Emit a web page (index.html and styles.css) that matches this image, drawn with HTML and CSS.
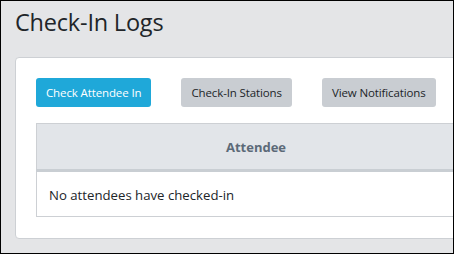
FILE: index.html
```html
<!DOCTYPE html>
<html lang="en">

<head>
    <meta charset="UTF-8">
    <meta name="viewport" content="width=device-width, initial-scale=1.0">
    <title>Check-In Logs</title>
    <link rel="stylesheet" href="styles.css">
</head>

<body>
    <div class="page">
        <h1>Check-In Logs</h1>

        <div class="card">
            <div class="actions">
                <button class="btn btn-primary">Check Attendee In</button>
                <button class="btn btn-secondary">Check-In Stations</button>
                <button class="btn btn-secondary">View Notifications</button>
            </div>

            <table class="logs">
                <thead>
                    <tr>
                        <th>Attendee</th>
                    </tr>
                </thead>
                <tbody>
                    <tr>
                        <td>No attendees have checked-in</td>
                    </tr>
                </tbody>
            </table>
        </div>
    </div>
</body>

</html>
```

FILE: styles.css
```css
html {
    background-color: #e4e5e7;
    font-family: "Open Sans", Arial, Helvetica, sans-serif;
}

body {
    margin: 0;
    overflow: hidden;
}

.page {
    box-sizing: border-box;
    width: 454px;
    height: 254px;
    border: 1px solid #000;
    padding: 0 0 0 14px;
    overflow: hidden;
}

h1 {
    margin: 5px 0 0 0;
    font-size: 23.5px;
    font-weight: 400;
    line-height: 32px;
    letter-spacing: -0.2px;
    color: #212529;
}

.card {
    box-sizing: border-box;
    width: 482px;
    margin-top: 19px;
    padding: 20px 20px 21px 20px;
    background-color: #fff;
    border: 1px solid #cdd0d4;
    border-radius: 4px;
}

.actions {
    display: flex;
    gap: 30px;
    margin-bottom: 16px;
}

.btn {
    height: 29px;
    padding: 0 10px;
    border: none;
    border-radius: 3px;
    font-family: inherit;
    font-size: 11.5px;
    letter-spacing: -0.12px;
    white-space: nowrap;
}

.btn-primary {
    background-color: #1fa8d9;
    color: #fff;
}

.btn-secondary {
    background-color: #c9cdd2;
    color: #212529;
}

.logs {
    width: 440px;
    border-collapse: collapse;
    border: 1px solid #cdd0d4;
}

.logs th {
    height: 45px;
    padding: 0;
    background-color: #e2e5e9;
    border-bottom: 3px solid #c9ced3;
    color: #5c6a78;
    font-size: 13px;
    font-weight: 700;
    text-align: center;
}

.logs td {
    height: 42px;
    padding: 2px 0 0 12px;
    color: #212529;
    font-size: 13.2px;
}
```
